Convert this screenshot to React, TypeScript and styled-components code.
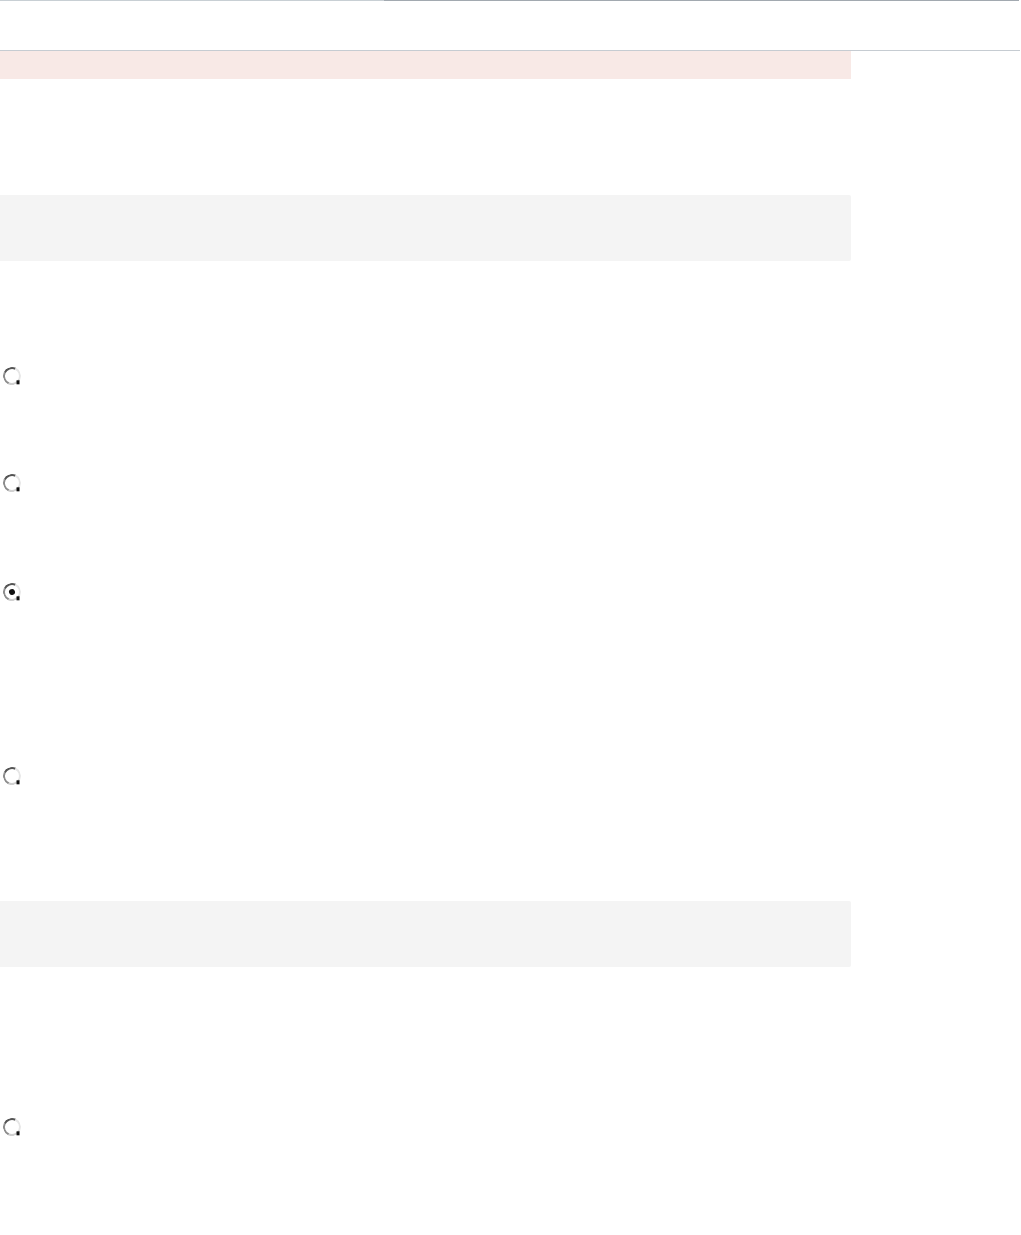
import React from 'react';
import styled, { createGlobalStyle } from 'styled-components';

const GlobalStyle = createGlobalStyle`
  html, body {
    margin: 0;
    padding: 0;
    background: #ffffff;
    font-family: "Liberation Sans", Arial, sans-serif;
  }
`;

const options = [
  { space: 106, checked: false },
  { space: 89, checked: false },
  { space: 91, checked: true },
  { space: 166, checked: false },
];

const App = () => {
  return (
    <>
      <GlobalStyle />
      <Page>
        <Header />
        <Main>
          <Alert />
          <Panel $space={116} />
          {options.map((o, i) => (
            <Option key={i} $space={o.space}>
              <Radio $checked={o.checked} />
            </Option>
          ))}
          <Panel $space={116} />
          <Option $space={151}>
            <Radio $checked={false} />
          </Option>
        </Main>
      </Page>
    </>
  );
};

export default App;

const Page = styled.div`
  width: 1021px;
  min-height: 1235px;
  display: flex;
  flex-direction: column;
`;

const Header = styled.header`
  width: 1020px;
  height: 51px;
  box-sizing: border-box;
  border-bottom: 1px solid #c6ccd2;
  background: linear-gradient(to right, #c8cfd4 0, #c8cfd4 384px, #a2a9b0 384px, #a2a9b0 1019px, transparent 1019px)
    top / 100% 1px no-repeat;
`;

const Main = styled.main`
  width: 851px;
  display: flex;
  flex-direction: column;
`;

const Alert = styled.div`
  height: 28px;
  background: #f8e9e6;
`;

const Panel = styled.section<{ $space: number }>`
  margin-top: ${(p) => p.$space}px;
  height: 66px;
  background: #f4f4f4;
  border-radius: 0 2px 2px 0;
`;

const Option = styled.label<{ $space: number }>`
  display: flex;
  align-items: center;
  gap: 8px;
  padding-top: ${(p) => p.$space}px;
  padding-left: 3px;
  height: 18px;
  box-sizing: content-box;
`;

const Radio = styled.span<{ $checked: boolean }>`
  position: relative;
  width: 18px;
  height: 18px;
  box-sizing: border-box;
  border-radius: 50%;
  border: 2.5px solid;
  border-color: #555555 #e6e6e6 #d0d0d0 #8c8c8c;
  transform: rotate(-20deg);
  background: #ffffff;
  &::before {
    content: '';
    display: ${(p) => (p.$checked ? 'block' : 'none')};
    position: absolute;
    left: 3.5px;
    top: 3.5px;
    width: 6px;
    height: 6px;
    border-radius: 50%;
    background: #111111;
  }
  &::after {
    content: '';
    position: absolute;
    left: 9px;
    top: 13px;
    width: 3px;
    height: 4px;
    background: #111111;
    transform: rotate(20deg);
  }
`;
